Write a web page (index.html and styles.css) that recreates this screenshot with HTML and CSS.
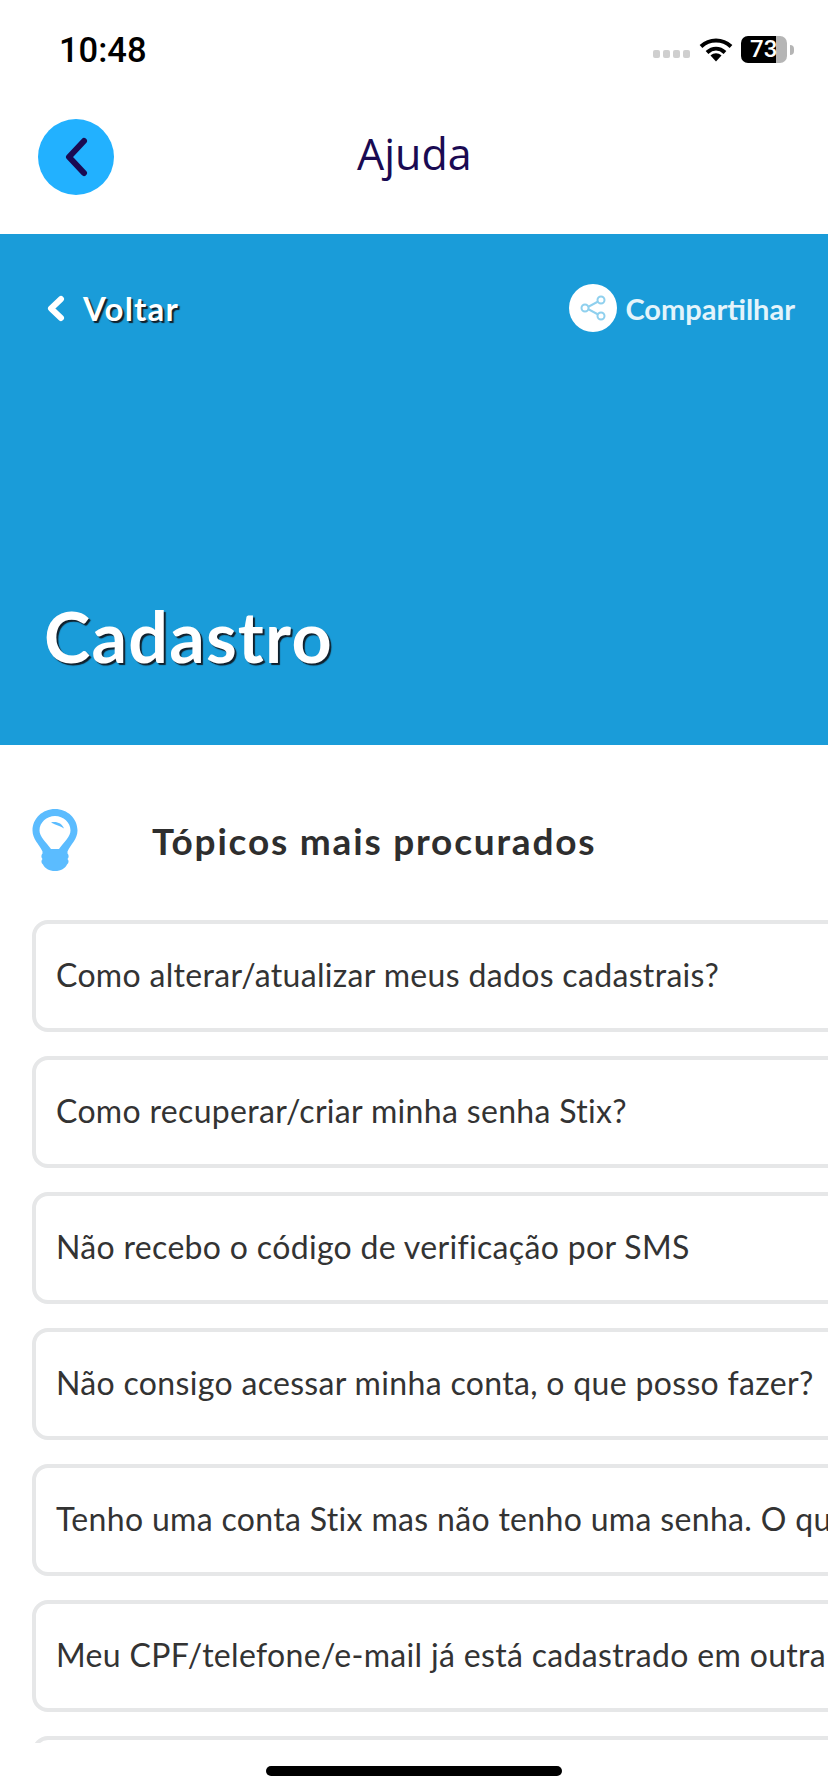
FILE: index.html
```html
<!DOCTYPE html>
<html lang="pt-BR">
<head>
    <meta charset="UTF-8">
    <meta name="viewport" content="width=device-width, initial-scale=1.0">
    <title>Ajuda</title>
    <link rel="stylesheet" href="styles.css">
</head>
<body>
  <div class="screen">
    <!-- status bar -->
    <div class="status">
      <span class="clock">10:48</span>
      <div class="status-icons">
        <div class="cells"><i></i><i></i><i></i><i></i></div>
        <svg class="wifi" width="34" height="25" viewBox="0 0 34 25">
          <path d="M2 9.500C10.500 1.500 23.500 1.500 32 9.500" fill="none" stroke="#000" stroke-width="4"/>
          <path d="M8 15.500C13.500 10.500 20.500 10.500 26 15.500" fill="none" stroke="#000" stroke-width="4"/>
          <path d="M11.500 18.500C15 15.500 19 15.500 22.500 18.500L17 24.500Z" fill="#000"/>
        </svg>
        <div class="battery"><span class="battery-level">73</span></div>
        <div class="battery-nub"></div>
      </div>
    </div>

    <!-- header -->
    <div class="header">
      <div class="back-circle">
        <svg width="26" height="40" viewBox="0 0 26 40">
          <path d="M21 4L6 20L21 36" fill="none" stroke="#1a0a52" stroke-width="6" stroke-linecap="round" stroke-linejoin="round"/>
        </svg>
      </div>
      <h1 class="header-title">Ajuda</h1>
    </div>

    <!-- banner -->
    <div class="banner">
      <div class="banner-top">
        <div class="back-link">
          <svg width="18" height="27" viewBox="0 0 18 27">
            <path d="M14 4L4 13.500L14 23" fill="none" stroke="#fff" stroke-width="6" stroke-linecap="round" stroke-linejoin="round"/>
          </svg>
          <span class="back-text">Voltar</span>
        </div>
        <div class="share">
          <div class="share-circle">
            <svg width="30" height="30" viewBox="0 0 30 30">
              <path d="M22 7.500L8 15L22 22.500" fill="none" stroke="#8fd0ee" stroke-width="2"/>
              <circle cx="23" cy="7" r="3.500" fill="#fff" stroke="#8fd0ee" stroke-width="2"/>
              <circle cx="7" cy="15" r="3.500" fill="#fff" stroke="#8fd0ee" stroke-width="2"/>
              <circle cx="23" cy="23" r="3.500" fill="#fff" stroke="#8fd0ee" stroke-width="2"/>
            </svg>
          </div>
          <span class="share-text">Compartilhar</span>
        </div>
      </div>
      <h2 class="banner-title">Cadastro</h2>
    </div>

    <!-- topics -->
    <div class="topics">
      <div class="topics-head">
        <svg class="bulb" width="46" height="62" viewBox="0 0 46 62">
          <path fill-rule="evenodd" fill="#5bbcff" d="M23 0C35.500 0 45.500 9.500 45.500 21.500C45.500 30 39 35 35.500 42.500L35.500 44.500C37 46 37 48.500 35.500 50C37 51.500 37 54 35 55.500C33 59.500 29 62 23 62C17 62 13 59.500 11 55.500C9 54 9 51.500 10.500 50C9 48.500 9 46 10.500 44.500L10.500 42.500C7 35 .5 30 .5 21.500C.5 9.500 10.500 0 23 0ZM23 7C14.500 7 7.500 13.500 7.500 21.500C7.500 27.500 14 33 19 40L27 40C32 33 38.500 27.500 38.500 21.500C38.500 13.500 31.500 7 23 7Z"/>
          <path d="M19 13.500C24 12 30 14 32 19.500C28 17 24 16 19 13.500Z" fill="#5bbcff"/>
        </svg>
        <h3 class="topics-title">Tópicos mais procurados</h3>
      </div>
      <div class="topic-list">
        <div class="topic">Como alterar/atualizar meus dados cadastrais?</div>
        <div class="topic">Como recuperar/criar minha senha Stix?</div>
        <div class="topic">Não recebo o código de verificação por SMS</div>
        <div class="topic">Não consigo acessar minha conta, o que posso fazer?</div>
        <div class="topic">Tenho uma conta Stix mas não tenho uma senha. O que faço?</div>
        <div class="topic">Meu CPF/telefone/e-mail já está cadastrado em outra conta</div>
        <div class="topic"></div>
      </div>
    </div>

    <!-- home indicator -->
    <div class="home-bar"><div class="home-pill"></div></div>
  </div>
</body>
</html>
```

FILE: styles.css
```css
body{
  margin: 0;
  background-color: white;
  font-family: Lato, "Noto Sans", sans-serif;
}

.screen{
  width: 828px;
  height: 1792px;
  overflow: hidden;
  display: flex;
  flex-direction: column;
}

/* status bar */
.status{
  height: 100px;
  flex-shrink: 0;
  display: flex;
  justify-content: space-between;
  align-items: flex-start;
  box-sizing: border-box;
  padding: 31px 34px 0 59px;
}

.clock{
  font-family: Roboto, sans-serif;
  font-weight: 500;
  font-size: 34.500px;
  line-height: 39px;
  color: black;
}

.status-icons{
  display: flex;
  align-items: center;
  height: 27px;
  margin-top: 5px;
}

.cells{
  display: flex;
  gap: 3px;
  margin: 8px 9px 0 0;
}

.cells i{
  display: block;
  width: 7px;
  height: 8px;
  border-radius: 2px;
  background-color: #cfcfcf;
}

.wifi{
  margin-right: 8px;
}

.battery{
  width: 46px;
  height: 27px;
  box-sizing: border-box;
  padding-left: 9px;
  border-radius: 7px;
  background: linear-gradient(to right, black 35px, #b5b5b5 35px);
}

.battery-level{
  display: block;
  color: white;
  font-family: Roboto, sans-serif;
  font-weight: 500;
  font-size: 24px;
  line-height: 27px;
  white-space: nowrap;
}

.battery-nub{
  width: 4px;
  height: 10px;
  margin-left: 3px;
  border-radius: 0 4px 4px 0;
  background-color: #b5b5b5;
}

/* header */
.header{
  height: 134px;
  flex-shrink: 0;
  display: flex;
  align-items: center;
  box-sizing: border-box;
  padding: 0 0 20px 38px;
}

.back-circle{
  width: 76px;
  height: 76px;
  border-radius: 50%;
  background-color: #22b1ff;
  display: flex;
  align-items: center;
  justify-content: center;
}

.header-title{
  margin: 0 0 8px 243px;
  font-family: "Open Sans", sans-serif;
  font-weight: 400;
  font-size: 43px;
  color: #1a0a52;
}

/* banner */
.banner{
  height: 511px;
  flex-shrink: 0;
  background-color: #1a9cd9;
  display: flex;
  flex-direction: column;
  justify-content: space-between;
  box-sizing: border-box;
  padding: 50px 33px 69px 47px;
}

.banner-top{
  display: flex;
  justify-content: space-between;
  align-items: center;
}

.back-link{
  display: flex;
  align-items: center;
  gap: 18px;
}

.back-text{
  color: white;
  font-weight: 700;
  font-size: 33px;
  letter-spacing: 1.200px;
  text-shadow: 2px 2px 1px #10202c;
}

.share{
  display: flex;
  align-items: center;
  gap: 8px;
}

.share-circle{
  width: 48px;
  height: 48px;
  border-radius: 50%;
  background-color: white;
  display: flex;
  align-items: center;
  justify-content: center;
}

.share-text{
  color: #e4f4fb;
  font-weight: 700;
  font-size: 29px;
}

.banner-title{
  margin: 0 0 0 -3px;
  color: white;
  font-weight: 700;
  font-size: 70px;
  line-height: 80px;
  letter-spacing: 1.200px;
  text-shadow: 2px 2px 1px #10202c;
}

/* topics */
.topics{
  flex: 1;
  min-height: 0;
  overflow: hidden;
  padding: 64px 0 0 32px;
}

.topics-head{
  display: flex;
  align-items: center;
  gap: 74px;
  margin-bottom: 49px;
}

.topics-title{
  margin: 0;
  color: #2e2e2e;
  font-weight: 700;
  font-size: 37px;
  letter-spacing: 1.800px;
}

.topic-list{
  display: flex;
  flex-direction: column;
  gap: 24px;
}

.topic{
  width: 1000px;
  height: 112px;
  flex-shrink: 0;
  box-sizing: border-box;
  border: 4px solid #e6e7e8;
  border-radius: 16px;
  padding: 0 0 4px 20px;
  display: flex;
  align-items: center;
  color: #333;
  font-size: 32px;
  letter-spacing: .33px;
  white-space: nowrap;
}

.home-bar{
  height: 49px;
  flex-shrink: 0;
  background-color: white;
  display: flex;
  justify-content: center;
  padding-top: 23px;
  box-sizing: border-box;
}

.home-pill{
  width: 296px;
  height: 10px;
  border-radius: 5px;
  background-color: black;
}
```
